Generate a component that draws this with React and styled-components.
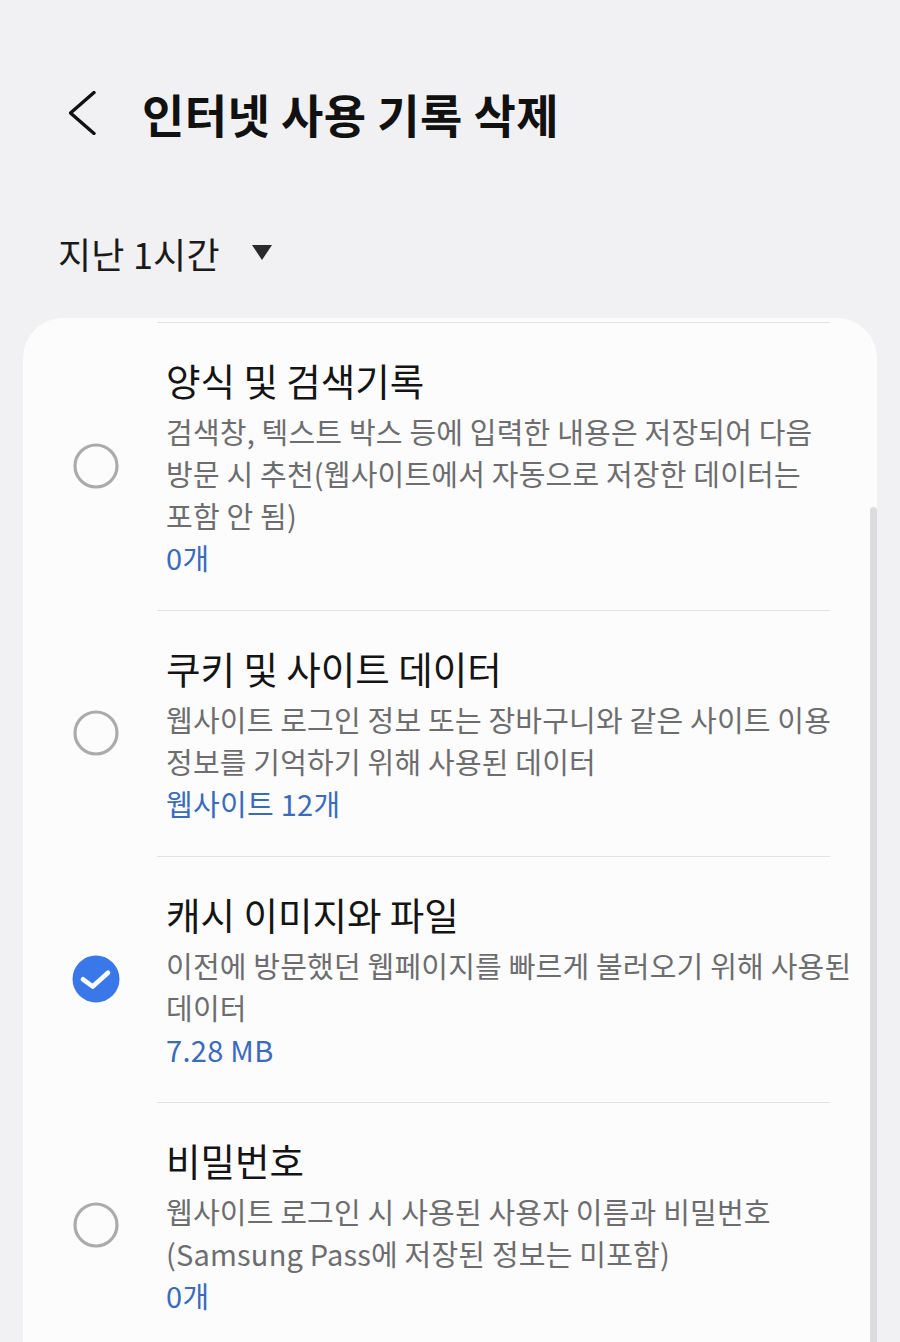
import React from 'react';
import styled, { createGlobalStyle } from 'styled-components';

const Global = createGlobalStyle`
  html, body { margin: 0; padding: 0; height: 1342px; overflow: hidden; background: #f1f1f3; }
  body { font-family: "Noto Sans CJK KR", "Noto Sans", sans-serif; -webkit-font-smoothing: antialiased; }
`;

const Page = styled.div`
  width: 900px;
  height: 1342px;
  overflow: hidden;
  background: #f1f1f3;
  padding-top: 83px;
  box-sizing: border-box;
`;

const Header = styled.header`
  display: flex;
  align-items: center;
  height: 60px;
  padding-left: 69px;
  gap: 46px;
`;

const Title = styled.h1`
  margin: 0;
  font-size: 46px;
  font-weight: 700;
  letter-spacing: 0.4px;
  line-height: 60px;
  color: #111;
`;

const Dropdown = styled.div`
  display: flex;
  align-items: center;
  gap: 32px;
  margin-top: 85px;
  padding-left: 58px;
  height: 50px;
  font-size: 36px;
  color: #1a1a1a;
  letter-spacing: 0.2px;
`;

const Card = styled.section`
  position: relative;
  margin: 40px 23px 0 23px;
  background: #fcfcfc;
  border-radius: 40px 40px 0 0;
  padding-top: 4px;
  min-height: 1100px;
`;

const Scrollbar = styled.div`
  position: absolute;
  right: 0;
  top: 189px;
  bottom: 0;
  width: 7px;
  background: #dcdcde;
  border-radius: 4px 4px 0 0;
`;

const Row = styled.div`
  display: flex;
  align-items: stretch;
`;

const RadioCell = styled.div`
  width: 134px;
  flex: none;
  display: flex;
  align-items: center;
  padding-left: 49px;
  box-sizing: border-box;
`;

const Content = styled.div`
  flex: 1;
  min-width: 0;
  margin-right: 47px;
  border-top: 1.5px solid #e2e2e4;
  padding: 32px 0 32px 9px;
  display: flex;
  flex-direction: column;
  white-space: nowrap;
`;

const ItemTitle = styled.div`
  font-size: 37.5px;
  line-height: 50px;
  color: #141414;
  letter-spacing: 0;
  margin-bottom: 5px;
`;

const Desc = styled.div`
  font-size: 29px;
  line-height: 42px;
  color: #6d6d70;
  letter-spacing: 0.2px;
`;

const Count = styled.div`
  font-size: 29px;
  line-height: 42px;
  color: #3a6bbd;
  letter-spacing: 0.3px;
`;

const Radio = ({ checked }) =>
  checked ? (
    <svg width="48" height="48" viewBox="0 0 48 48">
      <circle cx="24" cy="24" r="23.5" fill="#3a78ea" />
      <polyline points="11,24.3 20.7,31.5 36,17.7" fill="none" stroke="#fff" strokeWidth="4.6" strokeLinecap="round" strokeLinejoin="round" />
    </svg>
  ) : (
    <svg width="48" height="48" viewBox="0 0 48 48">
      <circle cx="24" cy="24" r="21" fill="none" stroke="#ababab" strokeWidth="3.2" />
    </svg>
  );

const items = [
  {
    title: '양식 및 검색기록',
    lines: ['검색창, 텍스트 박스 등에 입력한 내용은 저장되어 다음', '방문 시 추천(웹사이트에서 자동으로 저장한 데이터는', '포함 안 됨)'],
    count: '0개',
  },
  {
    title: '쿠키 및 사이트 데이터',
    lines: ['웹사이트 로그인 정보 또는 장바구니와 같은 사이트 이용', '정보를 기억하기 위해 사용된 데이터'],
    count: '웹사이트 12개',
  },
  {
    title: '캐시 이미지와 파일',
    lines: ['이전에 방문했던 웹페이지를 빠르게 불러오기 위해 사용된', '데이터'],
    count: '7.28 MB',
    checked: true,
  },
  {
    title: '비밀번호',
    lines: ['웹사이트 로그인 시 사용된 사용자 이름과 비밀번호', '(Samsung Pass에 저장된 정보는 미포함)'],
    count: '0개',
  },
];

export default function App() {
  return (
    <Page>
      <Global />
      <Header>
        <svg width="27" height="44" viewBox="0 0 27 44">
          <polyline points="25,1.5 1.5,22 25,42.5" fill="none" stroke="#111" strokeWidth="3.4" strokeLinecap="round" strokeLinejoin="round" />
        </svg>
        <Title>인터넷 사용 기록 삭제</Title>
      </Header>
      <Dropdown>
        <span>지난 1시간</span>
        <svg width="20" height="16" viewBox="0 0 20 16">
          <polygon points="0,0 20,0 10,15" fill="#2a2a2a" />
        </svg>
      </Dropdown>
      <Card>
        {items.map((it) => (
          <Row key={it.title}>
            <RadioCell>
              <Radio checked={it.checked} />
            </RadioCell>
            <Content>
              <ItemTitle>{it.title}</ItemTitle>
              {it.lines.map((l) => (
                <Desc key={l}>{l}</Desc>
              ))}
              <Count>{it.count}</Count>
            </Content>
          </Row>
        ))}
        <Scrollbar />
      </Card>
    </Page>
  );
}
